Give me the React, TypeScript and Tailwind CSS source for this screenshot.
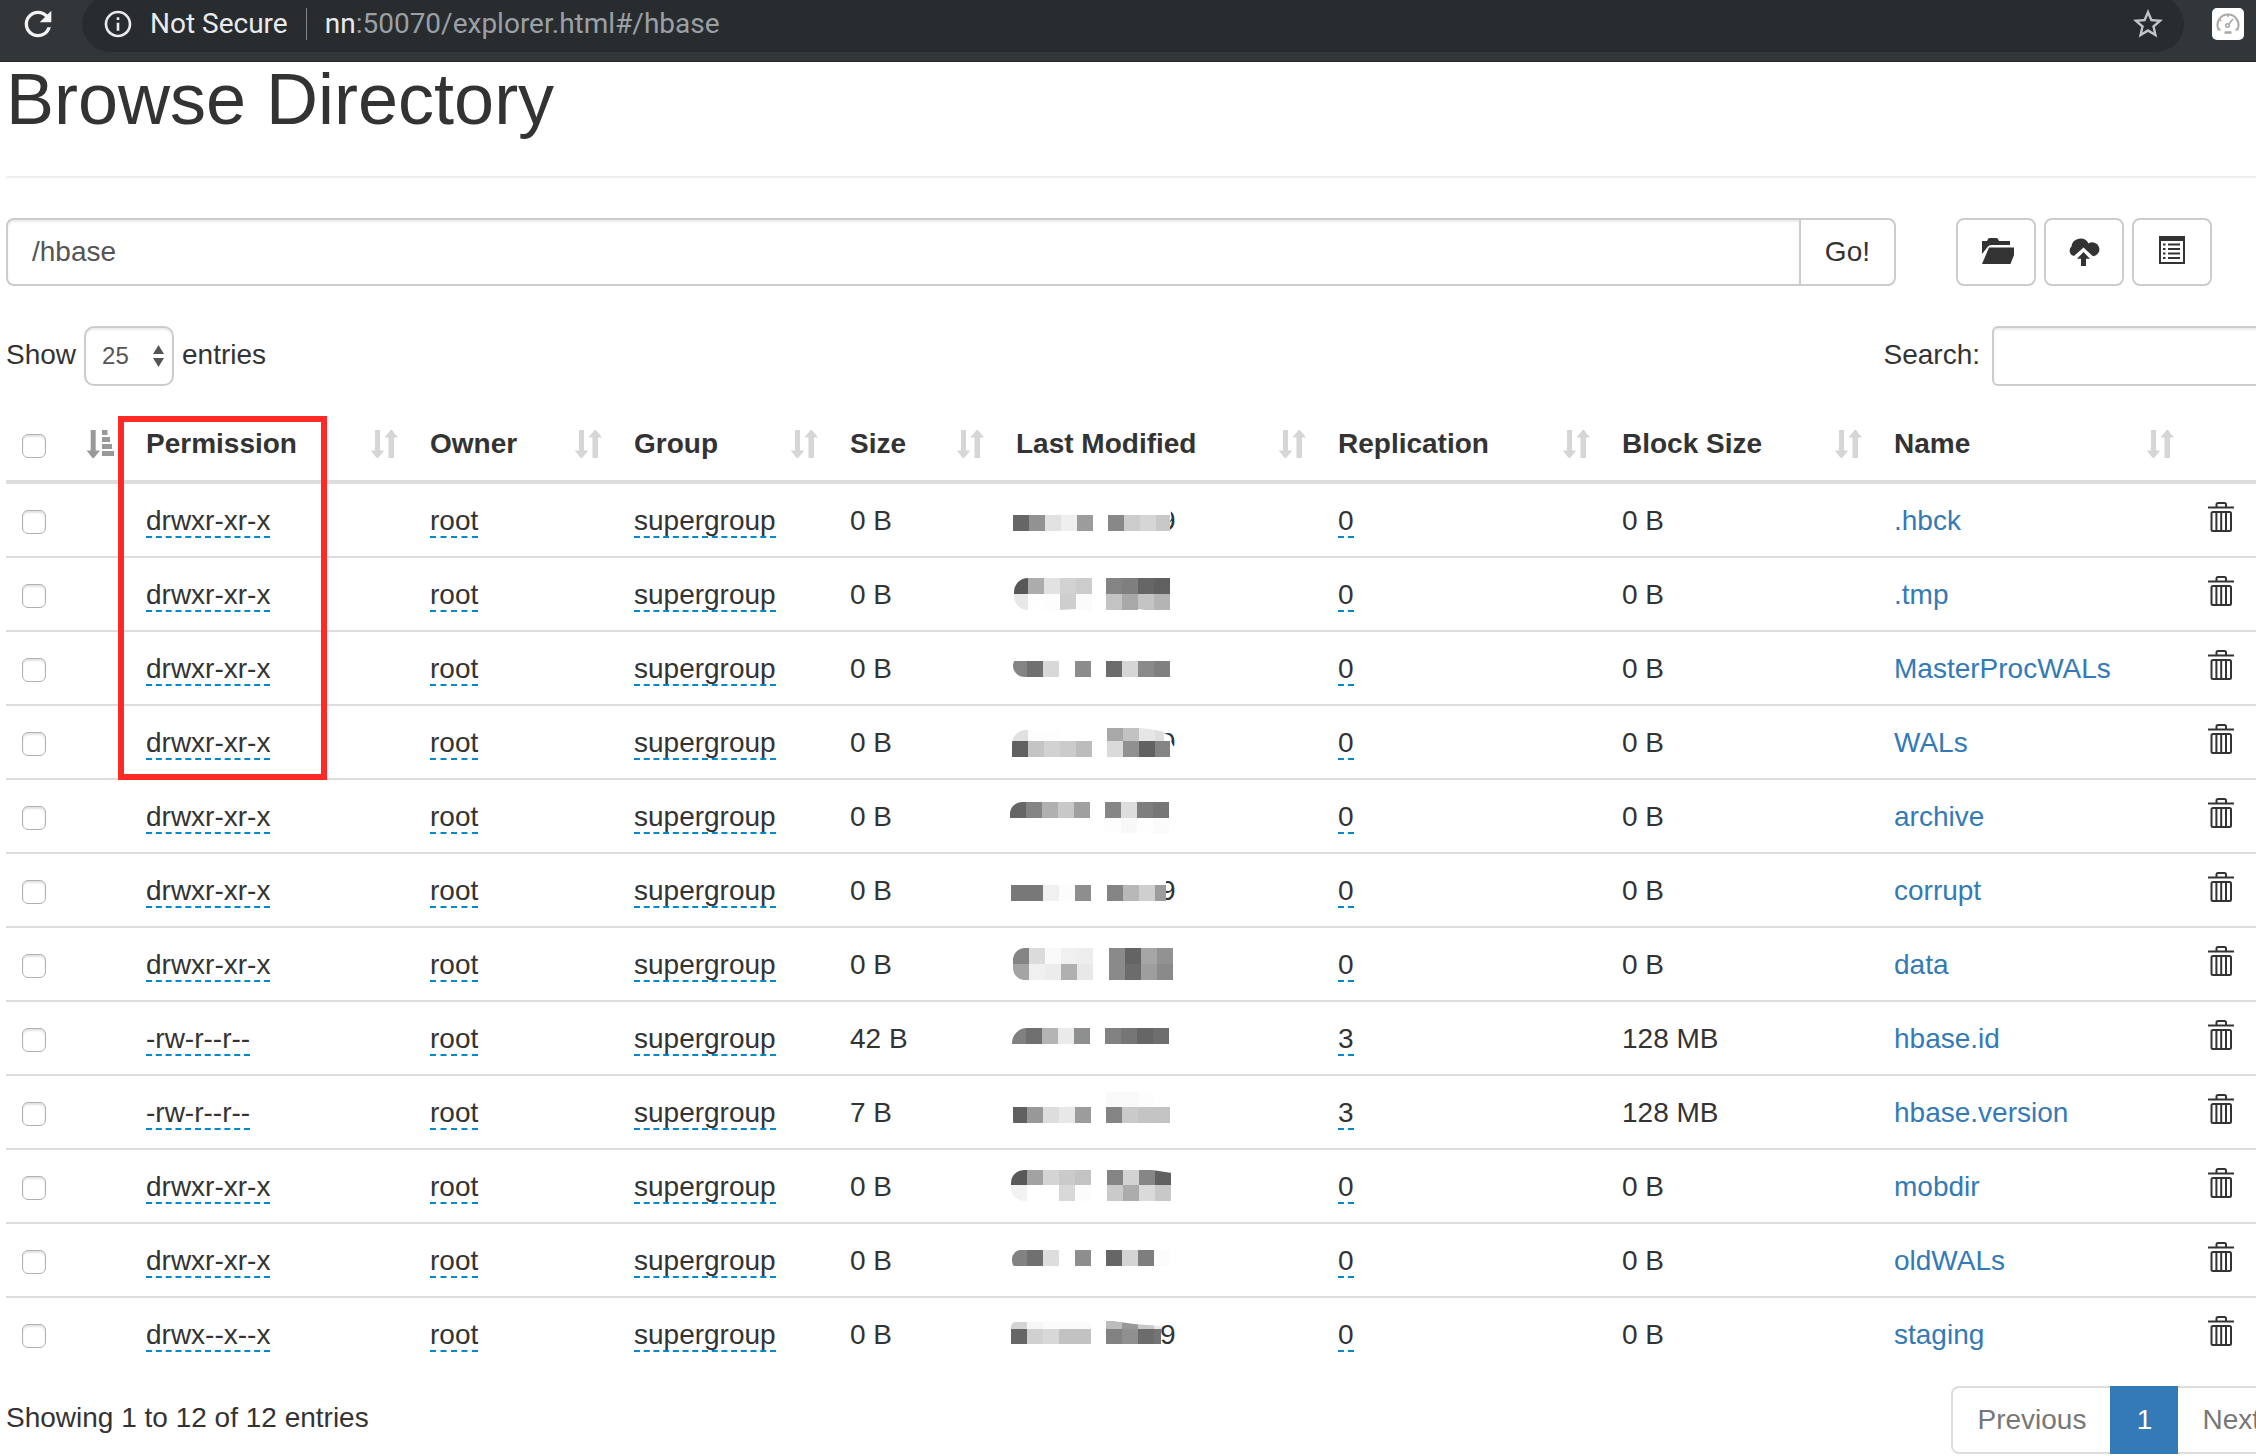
import { MdInfoOutline, MdRefresh, MdStarBorder } from 'react-icons/md'

type Block = { x: number; y: number; h: number; fills: string[]; last?: number }

type Mosaic = {
  clip: [x: number, y: number, height: number, radius: number]
  blocks: Block[]
  tail?: string
  cover?: string
}

type Entry = {
  name: string
  permission: string
  size: string
  replication: number
  blockSize: string
  modified: Mosaic
}

const DIR = 'drwxr-xr-x'
const FILE = '-rw-r--r--'

const entries: Entry[] = [
  {
    name: '.hbck', permission: DIR, size: '0 B', replication: 0, blockSize: '0 B',
    modified: {
      clip: [5, 15, 16, 0],
      tail: 'M0 0H161Q166 20 158 32H0z',
      blocks: [
        { x: 5, y: 15, h: 16, fills: ['#666', '#929292', '#e2e2e2', '#efefef', '#9c9c9c'] },
        { x: 100, y: 15, h: 16, last: 14, fills: ['#888', '#ccc', '#d6d6d6', '#c8c8c8'] },
      ],
    },
  },
  {
    name: '.tmp', permission: DIR, size: '0 B', replication: 0, blockSize: '0 B',
    modified: {
      clip: [6, 4, 32, 14],
      cover: 'M52 36L68 35V37H52zM130 35L144 37H130z',
      blocks: [
        { x: 4, y: 4, h: 16, fills: ['#585858', '#acacac', '#e2e2e2', '#d2d2d2', '#ccc'] },
        { x: 4, y: 20, h: 16, fills: ['#e8e8e8', '#fefefe', '#fdfdfd', '#cecece', '#fbfbfb'] },
        { x: 98, y: 4, h: 16, fills: ['#848484', '#7f7f7f', '#666', '#606060'] },
        { x: 98, y: 20, h: 16, fills: ['#c3c3c3', '#a8a8a8', '#c4c4c4', '#b4b4b4'] },
      ],
    },
  },
  {
    name: 'MasterProcWALs', permission: DIR, size: '0 B', replication: 0, blockSize: '0 B',
    modified: {
      clip: [5, 7, 22, 12],
      blocks: [
        { x: 3, y: 13, h: 16, fills: ['#848484', '#707070', '#d8d8d8', '#fff', '#8c8c8c'] },
        { x: 98, y: 13, h: 16, fills: ['#6c6c6c', '#d6d6d6', '#8a8a8a', '#808080'] },
      ],
    },
  },
  {
    name: 'WALs', permission: DIR, size: '0 B', replication: 0, blockSize: '0 B',
    modified: {
      clip: [4, 8, 40, 14],
      tail: 'M0 0H156V12Q162 11 163 18Q164 24 168 26V36H0z',
      cover: 'M132 6Q146 7 156 10V6z',
      blocks: [
        { x: 4, y: 6, h: 13, fills: ['#e0e0e0', '#fdfdfd', '#fdfdfd', '#fff', '#fff'] },
        { x: 4, y: 19, h: 16, fills: ['#606060', '#c4c4c4', '#d2d2d2', '#cbcbcb', '#bcbcbc'] },
        { x: 99, y: 6, h: 13, last: 9, fills: ['#a8a8a8', '#c2c2c2', '#e6e6e6', '#dedede'] },
        { x: 99, y: 19, h: 16, last: 15, fills: ['#dadada', '#909090', '#626262', '#848484'] },
      ],
    },
  },
  {
    name: 'archive', permission: DIR, size: '0 B', replication: 0, blockSize: '0 B',
    modified: {
      clip: [2, 6, 31, 12],
      blocks: [
        { x: 2, y: 6, h: 16, fills: ['#666', '#848484', '#b0b0b0', '#c8c8c8', '#a0a0a0'] },
        { x: 97, y: 6, h: 16, fills: ['#868686', '#ddd', '#7e7e7e', '#767676'] },
        { x: 97, y: 22, h: 15, fills: ['#fdfdfd', '#f8f8f8', '#fefefe', '#fbfbfb'] },
      ],
    },
  },
  {
    name: 'corrupt', permission: DIR, size: '0 B', replication: 0, blockSize: '0 B',
    modified: {
      clip: [3, 15, 16, 0],
      tail: 'M0 0H158V36H0z',
      blocks: [
        { x: 3, y: 15, h: 16, fills: ['#787878', '#787878', '#f0f0f0', '#fcfcfc', '#8e8e8e'] },
        { x: 99, y: 15, h: 16, last: 11, fills: ['#848484', '#b8b8b8', '#cfcfcf', '#9c9c9c'] },
      ],
    },
  },
  {
    name: 'data', permission: DIR, size: '0 B', replication: 0, blockSize: '0 B',
    modified: {
      clip: [5, 4, 32, 12],
      blocks: [
        { x: 5, y: 4, h: 16, fills: ['#848484', '#dbdbdb', '#f9f9f9', '#f0f0f0', '#eee'] },
        { x: 5, y: 20, h: 16, fills: ['#a4a4a4', '#f0f0f0', '#ececec', '#b0b0b0', '#e8e8e8'] },
        { x: 101, y: 4, h: 16, fills: ['#8a8a8a', '#646464', '#a6a6a6', '#929292'] },
        { x: 101, y: 20, h: 16, fills: ['#8a8a8a', '#6c6c6c', '#9e9e9e', '#8a8a8a'] },
      ],
    },
  },
  {
    name: 'hbase.id', permission: FILE, size: '42 B', replication: 3, blockSize: '128 MB',
    modified: {
      clip: [4, 10, 32, 15],
      blocks: [
        { x: 2, y: 10, h: 16, fills: ['#808080', '#707070', '#b4b4b4', '#eaeaea', '#8e9090'] },
        { x: 97, y: 10, h: 16, fills: ['#828282', '#767676', '#666', '#6e6e6e'] },
      ],
    },
  },
  {
    name: 'hbase.version', permission: FILE, size: '7 B', replication: 3, blockSize: '128 MB',
    modified: {
      clip: [5, 0, 35, 6],
      blocks: [
        { x: 98, y: 0, h: 15, fills: ['#f9f9f9', '#f9f9f9', '#fdfdfd'] },
        { x: 3, y: 15, h: 16, fills: ['#606060', '#989898', '#ddd', '#e8e8e8', '#9c9c9c'] },
        { x: 98, y: 15, h: 16, fills: ['#848484', '#cacaca', '#c4c4c4', '#c3c3c3'] },
      ],
    },
  },
  {
    name: 'mobdir', permission: DIR, size: '0 B', replication: 0, blockSize: '0 B',
    modified: {
      clip: [3, 4, 31, 13],
      cover: 'M144 4L164 7V4z',
      blocks: [
        { x: 3, y: 4, h: 15, fills: ['#585858', '#a2a2a2', '#d4d4d4', '#cacaca', '#c3c3c3'] },
        { x: 3, y: 19, h: 16, fills: ['#f2f2f2', '#fff', '#fff', '#d8d8d8', '#fcfcfc'] },
        { x: 99, y: 4, h: 15, fills: ['#848484', '#d2d2d2', '#868686', '#606060'] },
        { x: 99, y: 19, h: 16, fills: ['#cacaca', '#acacac', '#dadada', '#c8c8c8'] },
      ],
    },
  },
  {
    name: 'oldWALs', permission: DIR, size: '0 B', replication: 0, blockSize: '0 B',
    modified: {
      clip: [4, 10, 20, 9],
      blocks: [
        { x: 3, y: 10, h: 16, fills: ['#828282', '#707070', '#ddd', '#fff', '#8e8e8e'] },
        { x: 98, y: 10, h: 16, fills: ['#666', '#d4d4d4', '#7e7e7e', '#fcfcfc'] },
      ],
    },
  },
  {
    name: 'staging', permission: 'drwx--x--x', size: '0 B', replication: 0, blockSize: '0 B',
    modified: {
      clip: [3, 8, 32, 5],
      tail: 'M0 0H152V36H0z',
      cover: 'M98 6L126 10L153 12V6z',
      blocks: [
        { x: 3, y: 8, h: 7, fills: ['#d4d4d4', '#f6f6f6', '#fbfbfb', '#fbfbfb', '#fbfbfb'] },
        { x: 3, y: 15, h: 15, fills: ['#666', '#d0d0d0', '#d8d8d8', '#c2c2c2', '#c2c2c2'] },
        { x: 98, y: 7, h: 8, last: 7, fills: ['#bcbcbc', '#989898', '#c8c8c8', '#e8e8e8'] },
        { x: 98, y: 15, h: 15, last: 7, fills: ['#828282', '#909090', '#6c6c6c', '#747474'] },
      ],
    },
  },
]

const columns = ['Permission', 'Owner', 'Group', 'Size', 'Last Modified', 'Replication', 'Block Size', 'Name']

function SortBoth() {
  return (
    <svg className="size-7 shrink-0 fill-[#d6d6d6]" viewBox="0 0 28 28" aria-hidden="true">
      <path d="M5 0h5v20.5h4.3l-5.8 7.1a1.5 1.5 0 0 1-2.2 0L.7 20.5H5z" />
      <path d="M18.5 28H24V7.500h4L22.400.5a1.5 1.5 0 0 0-2.200 0L14.500 7.500h4z" />
    </svg>
  )
}

function SortAttributes() {
  return (
    <svg className="size-7 shrink-0 fill-[#999]" viewBox="0 0 28 28" aria-hidden="true">
      <path d="M4.7 0h5v20.5H14l-5.7 7.100a1.5 1.5 0 0 1-2.2 0L.5 20.500h4.2z" />
      <path d="M16 0h5.500v5H16zM16 7h8v5h-8zM16 14h10v5H16zM16 21h12v5H16z" />
    </svg>
  )
}

function TrashIcon() {
  return (
    <svg className="h-8 w-7" viewBox="0 0 28 32" fill="none" stroke="#333" strokeWidth="2" aria-hidden="true">
      <path d="M10.5 7V4.500Q10.5 3 12 3h6.500Q20 3 20 4.500V7" />
      <path d="M2 7.500h26" />
      <rect x="5.5" y="12" width="19.5" height="19" rx="1.5" />
      <path d="M10.4 12v19M15.2 12v19M20 12v19" />
    </svg>
  )
}

function FolderOpenIcon() {
  return (
    <svg className="h-7 w-9 fill-[#333]" viewBox="-3 0 36 28" aria-hidden="true">
      <path d="M1 16V3h5l1-2q.5-1 2-1h6q1.5 0 2 1l1 2h11v4H10Q8 7 7 8.500z" />
      <path d="M8 9.500h28L29.500 26H1z" />
    </svg>
  )
}

function CloudUploadIcon() {
  return (
    <svg className="h-7 w-8 fill-[#333]" viewBox="0 0 32 28" aria-hidden="true">
      <path d="M6 18a5.5 5.5 0 0 1-2.5-9.5A9 9 0 0 1 20.5 5.500 7 7 0 1 1 25 18.300L15.500 9.500z" />
      <path d="M15.500 14l6.500 6.800h-4V28h-5v-7.200H9z" />
    </svg>
  )
}

function ListIcon() {
  return (
    <svg className="h-8 w-7" viewBox="0 0 28 32" aria-hidden="true">
      <path className="fill-[#333]" fillRule="evenodd" d="M1 0h26v28H1zM3 5v21h22V5z" />
      <path className="fill-[#333]" d="M5 7.500h2.500v2H5zM5 12h2.500v2H5zM5 16.500h2.500v2H5zM5 21h2.500v2H5zM10 7.500h12v2H10zM10 12h12v2H10zM10 16.500h12v2H10zM10 21h12v2H10z" />
    </svg>
  )
}

function GaugeIcon() {
  return (
    <svg className="size-6" viewBox="0 0 24 24" fill="none" stroke="#a8a8a8" aria-hidden="true">
      <path strokeWidth="2" d="M4.500 17.500H2.500A10.500 10.500 0 1 1 21.500 17.500H19.500" />
      <path strokeWidth="1.5" d="M12 2v3M4 8l1.500 1M13 12l4-5" />
      <circle cx="11.5" cy="13.5" r="1.8" strokeWidth="1.5" />
      <path strokeWidth="2.5" d="M8.500 20.500h7" />
    </svg>
  )
}

function ModifiedMosaic({ id, mosaic }: { id: string; mosaic: Mosaic }) {
  const [x, y, height, radius] = mosaic.clip
  return (
    <svg className="h-10 w-[168px]" viewBox="0 0 168 40" aria-hidden="true">
      <clipPath id={id}>
        <rect x={x} y={y} width="200" height={height} rx={radius} />
        <rect x="90" y="0" width="74" height="40" />
      </clipPath>
      {mosaic.tail && (
        <>
          <text x="152" y="30" fontSize="28" fill="#333">9</text>
          <path d={mosaic.tail} fill="#fff" />
        </>
      )}
      <g clipPath={`url(#${id})`} shapeRendering="crispEdges">
        {mosaic.blocks.map((block) =>
          block.fills.map((fill, i) => (
            <rect
              key={`${block.x}-${block.y}-${i}`}
              x={block.x + i * 16}
              y={block.y}
              width={i === 3 && block.last ? block.last : 16}
              height={block.h}
              fill={fill}
            />
          )),
        )}
      </g>
      {mosaic.cover && <path d={mosaic.cover} fill="#fff" />}
    </svg>
  )
}

function Checkbox({ label }: { label: string }) {
  return (
    <input
      type="checkbox"
      aria-label={label}
      className="mt-1 block size-6 appearance-none rounded-md border border-[#b0b0b0] bg-white shadow-[inset_0_2px_2px_#e2e2e2]"
    />
  )
}

function Editable({ children }: { children: React.ReactNode }) {
  return <span className="cursor-pointer border-b-2 border-dashed border-[#0088cc]">{children}</span>
}

function BrowserBar() {
  return (
    <header className="flex h-[62px] items-start overflow-hidden border-b border-[#29242c] bg-[#323639] font-[Roboto,sans-serif] text-[28px]">
      <button type="button" aria-label="Reload" className="ml-[18px] mt-1 text-[#f1f3f4]">
        <MdRefresh className="size-10" />
      </button>
      <div className="-mt-1 ml-6 mr-7 flex h-14 flex-1 items-center rounded-full bg-[#282c2f] pl-5 pr-[18px]">
        <MdInfoOutline className="size-8 text-[#e8eaed]" />
        <span className="ml-4 text-[#e8eaed]">Not Secure</span>
        <span className="mx-[18px] h-8 w-px bg-[#80868b]" />
        <span className="flex-1 text-[#9aa0a6]">
          <span className="text-[#e8eaed]">nn</span>:50070/explorer.html#/hbase
        </span>
        <button type="button" aria-label="Bookmark this page" className="text-[#c0c4c8]">
          <MdStarBorder className="size-9" />
        </button>
      </div>
      <button type="button" aria-label="Speed extension" className="mr-3 mt-2 flex size-8 items-center justify-center rounded-[5px] bg-white">
        <GaugeIcon />
      </button>
    </header>
  )
}

const toolButton = 'flex h-[68px] w-20 items-center justify-center rounded-lg border-2 border-[#ccc] bg-white'
const textCell = 'px-4 pt-[17px] pb-[15px]'

export default function App() {
  return (
    <div className="w-full overflow-x-hidden bg-white font-['Liberation_Sans',Arial,sans-serif] text-[28px] leading-10 text-[#333]">
      <BrowserBar />

      <main className="-mr-[30px] pl-1.5">
        <h1 className="text-[72px] leading-[74px]">Browse Directory</h1>
        <hr className="my-10 border-t-2 border-[#eee]" />

        <div className="mr-[74px] flex gap-2">
          <form className="mr-[52px] flex flex-1" onSubmit={(e) => e.preventDefault()}>
            <input
              type="text"
              aria-label="Directory"
              defaultValue="/hbase"
              className="h-[68px] min-w-0 flex-1 rounded-l-lg border-2 border-r-0 border-[#ccc] px-6 text-[#555] shadow-[inset_0_2px_2px_#ececec]"
            />
            <button type="submit" className="rounded-r-lg border-2 border-[#ccc] px-6">Go!</button>
          </form>
          <button type="button" aria-label="Create directory" className={toolButton}><FolderOpenIcon /></button>
          <button type="button" aria-label="Upload files" className={toolButton}><CloudUploadIcon /></button>
          <button type="button" aria-label="Cut and paste" className={toolButton}><ListIcon /></button>
        </div>

        <div className="mt-10 flex h-[60px] justify-between">
          <label className="flex items-baseline gap-2">
            Show
            <span className="relative">
              <select
                defaultValue="25"
                className="h-[60px] w-[90px] appearance-none rounded-[10px] border-2 border-[#ccc] bg-white pl-4 text-2xl text-[#555] shadow-[inset_0_2px_2px_#ececec]"
              >
                <option>10</option>
                <option>25</option>
                <option>50</option>
                <option>100</option>
              </select>
              <svg className="pointer-events-none absolute right-2.5 top-[19px] h-[22px] w-[11px] fill-[#555]" viewBox="0 0 11 22" aria-hidden="true">
                <path d="M5.500 0L11 9H0zM5.500 22L0 13h11z" />
              </svg>
            </span>
            entries
          </label>
          <label className="flex items-baseline gap-3">
            Search:
            <input type="search" className="h-[60px] w-[294px] rounded-md border-2 border-[#ccc] px-5 text-2xl shadow-[inset_0_2px_2px_#ececec]" />
          </label>
        </div>

        <div className="relative mt-[22px]">
          <table className="w-full table-fixed border-separate border-spacing-0 text-left">
            <colgroup>
              <col className="w-[124px]" />
              <col className="w-[284px]" />
              <col className="w-[204px]" />
              <col className="w-[216px]" />
              <col className="w-[166px]" />
              <col className="w-[322px]" />
              <col className="w-[284px]" />
              <col className="w-[272px]" />
              <col className="w-[312px]" />
              <col />
            </colgroup>
            <thead>
              <tr>
                <th className="border-b-4 border-[#ddd] p-4">
                  <div className="flex h-10 items-center justify-between">
                    <Checkbox label="Select all" />
                    <button type="button" aria-label="Sort by type"><SortAttributes /></button>
                  </div>
                </th>
                {columns.map((column) => (
                  <th key={column} className="border-b-4 border-[#ddd] p-4 font-bold">
                    <button type="button" className="flex h-10 w-full items-center justify-between whitespace-nowrap">
                      {column}
                      <SortBoth />
                    </button>
                  </th>
                ))}
                <th className="border-b-4 border-[#ddd]" />
              </tr>
            </thead>
            <tbody className="[&>tr:not(:last-child)>td]:border-b-2 [&>tr>td]:border-[#ddd]">
              {entries.map((entry, i) => (
                <tr key={entry.name}>
                  <td className="p-4">
                    <div className="flex h-10 items-center"><Checkbox label={`Select ${entry.name}`} /></div>
                  </td>
                  <td className={textCell}><Editable>{entry.permission}</Editable></td>
                  <td className={textCell}><Editable>root</Editable></td>
                  <td className={textCell}><Editable>supergroup</Editable></td>
                  <td className={textCell}>{entry.size}</td>
                  <td className="px-2 py-4"><ModifiedMosaic id={`modified-${i}`} mosaic={entry.modified} /></td>
                  <td className={textCell}><Editable>{entry.replication}</Editable></td>
                  <td className={textCell}>{entry.blockSize}</td>
                  <td className={textCell}><a href={`#/hbase/${entry.name}`} className="text-[#337ab7]">{entry.name}</a></td>
                  <td className="p-4">
                    <button type="button" aria-label={`Delete ${entry.name}`} className="flex h-10 items-start"><TrashIcon /></button>
                  </td>
                </tr>
              ))}
            </tbody>
          </table>
          <div className="pointer-events-none absolute left-28 top-2 h-[364px] w-[209px] border-6 border-[#ff2a26]" />
        </div>

        <div className="mt-4 flex items-start justify-between">
          <p className="pt-3">Showing 1 to 12 of 12 entries</p>
          <nav aria-label="Pagination" className="flex h-[68px] text-[#777]">
            <a href="#previous" className="flex items-center rounded-l-lg border-2 border-r-0 border-[#ddd] px-6">Previous</a>
            <a href="#page-1" className="flex w-[68px] items-center justify-center bg-[#337ab7] text-white">1</a>
            <a href="#next" className="flex items-center rounded-r-lg border-2 border-l-0 border-[#ddd] px-6">Next</a>
          </nav>
        </div>
      </main>
    </div>
  )
}
